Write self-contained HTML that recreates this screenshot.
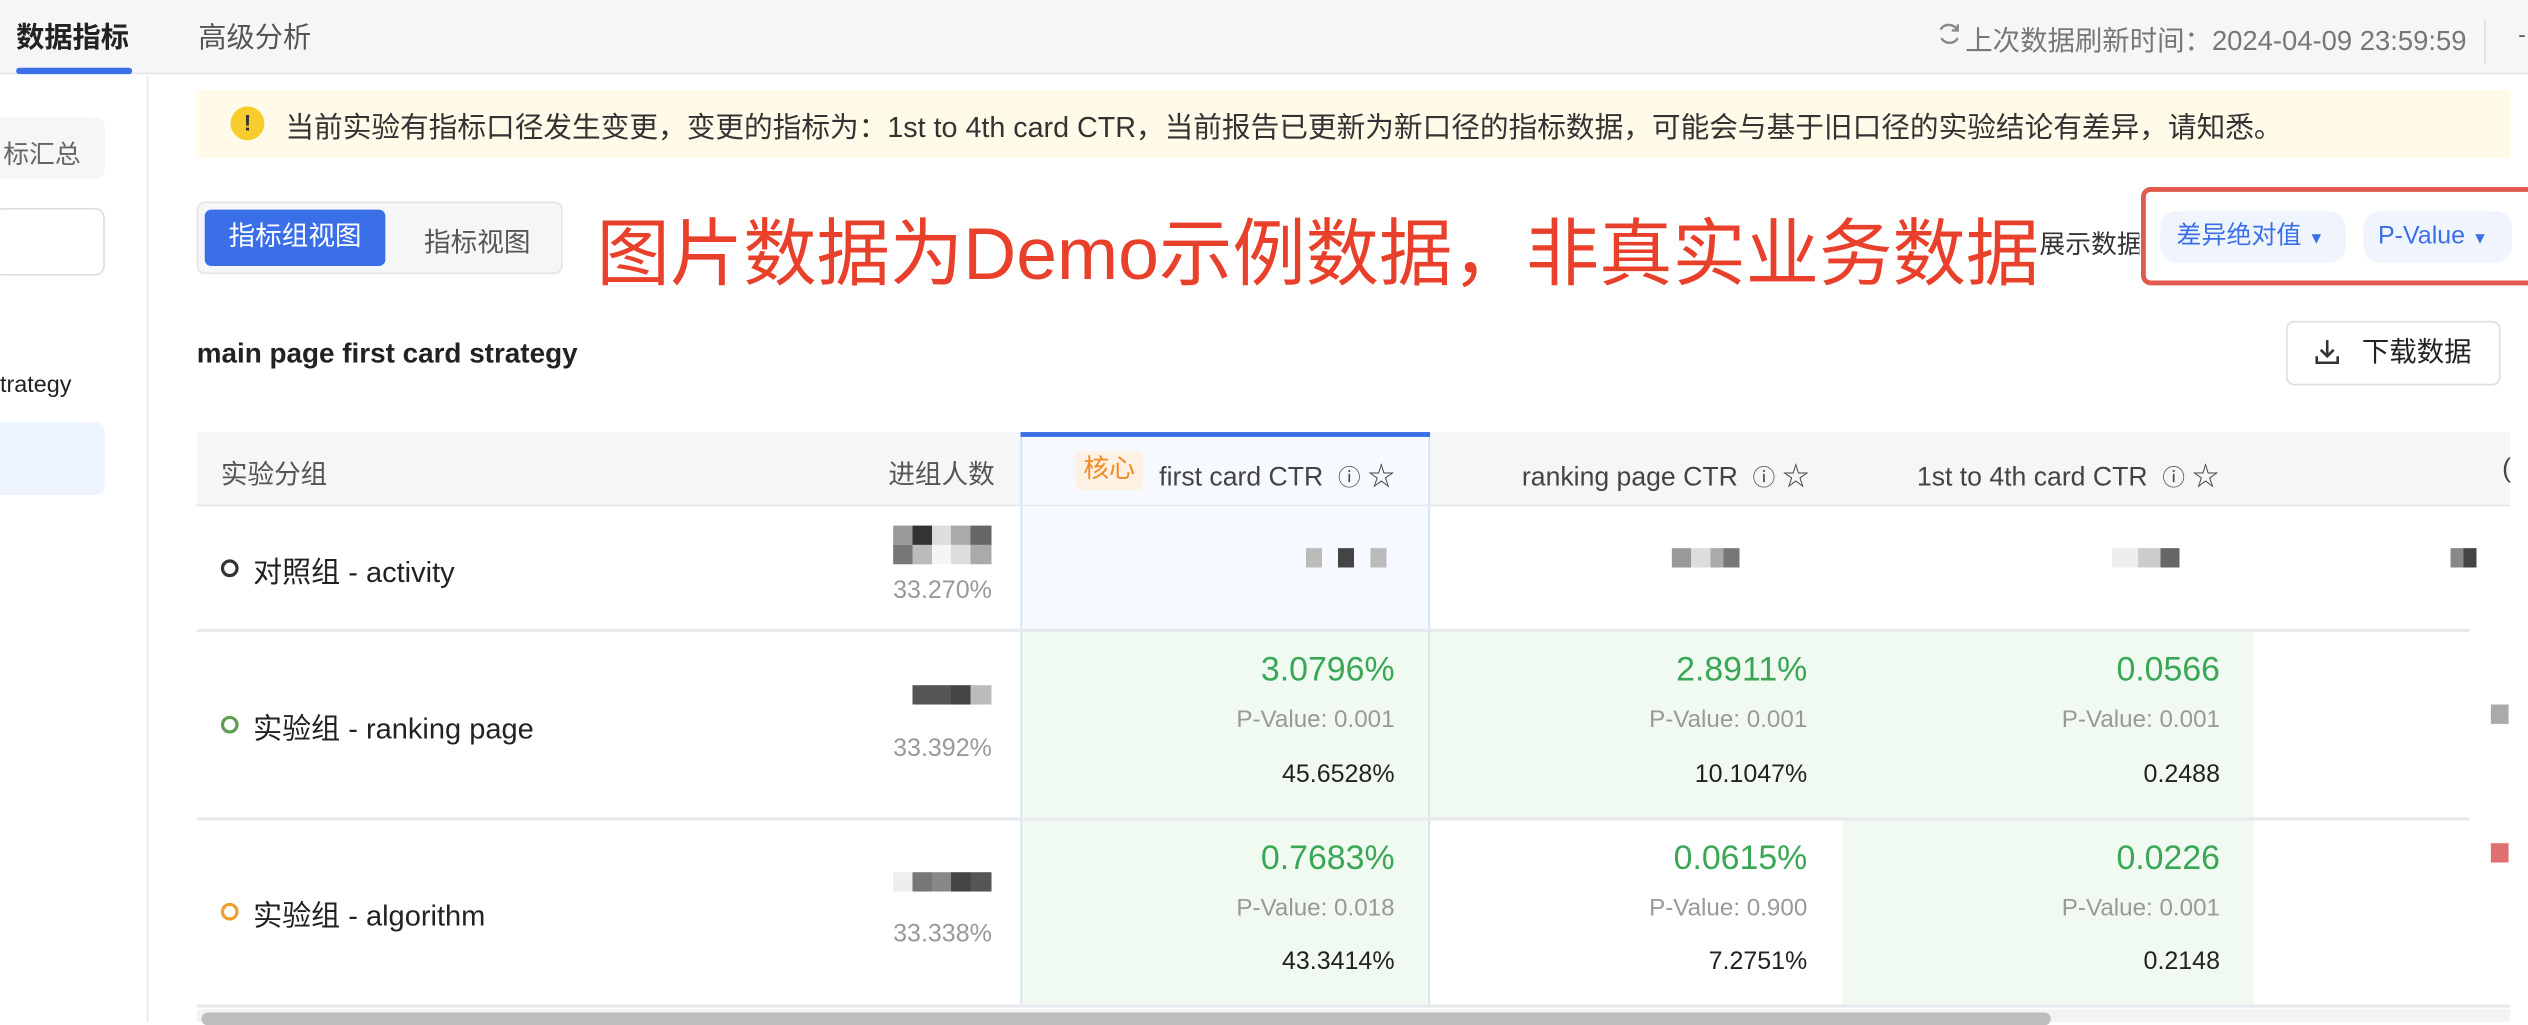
<!DOCTYPE html>
<html><head><meta charset="utf-8"><style>
*{box-sizing:border-box;margin:0;padding:0}
html,body{width:2528px;height:1022px;overflow:hidden;background:#fff}
#w{position:absolute;left:0;top:0;width:1568px;height:634px;transform:scale(1.6122);transform-origin:0 0;font-family:"Liberation Sans","Noto Sans CJK SC",sans-serif;color:#333;font-size:14px}
.a{position:absolute;white-space:nowrap}
.px{position:absolute}
</style></head><body><div id="w">
<!-- top bar -->
<div class="a" style="left:0;top:0;width:1568px;height:46px;background:#f5f6f8;border-bottom:1px solid #e6e7ea"></div>
<div class="a" style="left:10px;top:10px;font-size:17.5px;font-weight:bold;color:#222">数据指标</div>
<div class="a" style="left:10px;top:42px;width:72px;height:4px;background:#3a6fe8;border-radius:2px"></div>
<div class="a" style="left:123px;top:10px;font-size:17.5px;color:#555">高级分析</div>
<svg class="a" style="left:1201px;top:13px" width="16" height="16" viewBox="0 0 15 15"><path d="M12 5A5.5 5.5 0 0 0 2.5 5M3 10a5.5 5.5 0 0 0 9.5 0" fill="none" stroke="#888" stroke-width="1.4"/><path d="M12.5 2v3.5H9" fill="none" stroke="#888" stroke-width="1.4"/></svg>
<div class="a" style="left:1219px;top:11px;font-size:17px;color:#777">上次数据刷新时间：2024-04-09 23:59:59</div>
<div class="a" style="left:1541px;top:12px;width:1px;height:28px;background:#ddd"></div>
<div class="a" style="left:1562px;top:13px;color:#555">-</div>
<!-- sidebar -->
<div class="a" style="left:91px;top:47px;width:1px;height:587px;background:#e6e7ea"></div>
<div class="a" style="left:0;top:73px;width:65px;height:38px;background:#f5f6f8;border-radius:0 6px 6px 0"></div>
<div class="a" style="left:2px;top:82px;font-size:16px;color:#666">标汇总</div>
<div class="a" style="left:-4px;top:129px;width:69px;height:42px;border:1px solid #dcdde0;border-radius:6px"></div>
<div class="a" style="left:0;top:231px;font-size:14.5px;color:#222">trategy</div>
<div class="a" style="left:0;top:262px;width:65px;height:45px;background:#eef4ff;border-radius:0 6px 6px 0"></div>
<!-- alert -->
<div class="a" style="left:122px;top:56px;width:1435px;height:42px;background:#fffbe8"></div>
<div class="a" style="left:143px;top:66px;width:21px;height:21px;border-radius:50%;background:#f7cd2e;color:#333;font-weight:bold;font-size:14px;text-align:center;line-height:21px">!</div>
<div class="a" style="left:177px;top:65px;font-size:17.8px;color:#333">当前实验有指标口径发生变更，变更的指标为：1st to 4th card CTR，当前报告已更新为新口径的指标数据，可能会与基于旧口径的实验结论有差异，请知悉。</div>
<!-- segmented -->
<div class="a" style="left:122px;top:125px;width:227px;height:45px;background:#f5f6f8;border:1px solid #e2e3e6;border-radius:5px"></div>
<div class="a" style="left:127px;top:130px;width:112px;height:35px;background:#3a6fe8;border-radius:4px;color:#fff;font-size:16.5px;text-align:center;line-height:35px">指标组视图</div>
<div class="a" style="left:263px;top:137px;font-size:16.5px;color:#555">指标视图</div>
<div class="a" style="left:370px;top:121px;font-size:45.5px;color:#e8402a">图片数据为Demo示例数据，非真实业务数据</div>
<div class="a" style="left:1265px;top:138px;font-size:16px;color:#333;width:62px;overflow:hidden">展示数据</div>
<div class="a" style="left:1328px;top:116px;width:250px;height:61px;border:3px solid #e05a4e;border-radius:6px"></div>
<div class="a" style="left:1340px;top:131px;width:115px;height:32px;background:#f0f4fd;border-radius:10px;color:#3a6fe8;font-size:15.5px;line-height:32px;padding-left:10px">差异绝对值 <span style="font-size:10px">▼</span></div>
<div class="a" style="left:1466px;top:131px;width:92px;height:32px;background:#f0f4fd;border-radius:10px;color:#3a6fe8;font-size:15.5px;line-height:32px;padding-left:9px">P-Value <span style="font-size:10px">▼</span></div>
<div class="a" style="left:122px;top:209px;font-size:17.3px;font-weight:bold;color:#222">main page first card strategy</div>
<div class="a" style="left:1418px;top:199px;width:133px;height:40px;border:1px solid #dcdde0;border-radius:5px;font-size:17px;color:#222;line-height:38px;padding-left:46px">下载数据</div>
<svg class="a" style="left:1435px;top:209px" width="17" height="18" viewBox="0 0 17 18"><path d="M8.5 2v10M4.5 8l4 4 4-4M2 12v4h13v-4" fill="none" stroke="#333" stroke-width="1.6"/></svg>
<!-- table -->
<div class="a" style="left:122px;top:268px;width:1435px;height:45px;background:#f5f6f8"></div>
<div class="a" style="left:137px;top:281px;color:#555;font-size:16.5px">实验分组</div>
<div class="a" style="left:551px;top:281px;color:#555;font-size:16.5px">进组人数</div>
<!-- col backgrounds -->
<div class="a" style="left:633px;top:268px;width:254px;height:123px;background:#f6f9ff;border-left:1px solid #cfe0fb;border-right:1px solid #cfe0fb"></div>
<div class="a" style="left:633px;top:268px;width:254px;height:3px;background:#3a6fe8"></div>
<div class="a" style="left:633px;top:391px;width:254px;height:233px;background:#f1faf0;border-left:1px solid #cfe0fb;border-right:1px solid #cfe0fb"></div>
<div class="a" style="left:887px;top:391px;width:256px;height:117px;background:#f1faf0"></div>
<div class="a" style="left:1143px;top:391px;width:255px;height:233px;background:#f1faf0"></div>
<div class="a" style="left:667px;top:280px;width:42px;height:24px;background:#fdf1e3;border-radius:3px;color:#f08a24;font-size:16px;text-align:center;line-height:24px">核心</div>
<div class="a" style="left:719px;top:282px;color:#444;font-size:16.5px">first card CTR &nbsp;<span style="font-size:14px">ⓘ</span> ☆</div>
<div class="a" style="left:944px;top:282px;color:#444;font-size:16.5px">ranking page CTR &nbsp;<span style="font-size:14px">ⓘ</span> ☆</div>
<div class="a" style="left:1189px;top:282px;color:#444;font-size:16.5px">1st to 4th card CTR &nbsp;<span style="font-size:14px">ⓘ</span> ☆</div>
<div class="a" style="left:1552px;top:282px;color:#444;font-size:16.5px">(</div>
<!-- row lines -->
<div class="a" style="left:122px;top:313px;width:1435px;height:1px;background:#e6e7ea"></div>
<div class="a" style="left:122px;top:390px;width:1410px;height:2px;background:#e8e9ec"></div>
<div class="a" style="left:122px;top:507px;width:1410px;height:2px;background:#e8e9ec"></div>
<div class="a" style="left:122px;top:623px;width:1435px;height:2px;background:#e8e9ec"></div>
<!-- group names -->
<div class="a" style="left:137px;top:347px;width:11px;height:11px;border:2px solid #333;border-radius:50%"></div>
<div class="a" style="left:157px;top:341px;font-size:18px;color:#222">对照组 - activity</div>
<div class="a" style="left:137px;top:444px;width:11px;height:11px;border:2px solid #5a9e4e;border-radius:50%"></div>
<div class="a" style="left:157px;top:438px;font-size:18px;color:#222">实验组 - ranking page</div>
<div class="a" style="left:137px;top:560px;width:11px;height:11px;border:2px solid #f0a030;border-radius:50%"></div>
<div class="a" style="left:157px;top:554px;font-size:18px;color:#222">实验组 - algorithm</div>
<!-- pixelated counts -->
<div class="px" style="left:554px;top:326px;width:61px;height:12px;background:linear-gradient(90deg,#999 0 12px,#333 12px 24px,#ddd 24px 36px,#aaa 36px 48px,#666 48px)"></div>
<div class="px" style="left:554px;top:338px;width:61px;height:12px;background:linear-gradient(90deg,#777 0 12px,#bbb 12px 24px,#f5f5f5 24px 36px,#ddd 36px 48px,#aaa 48px)"></div>
<div class="a" style="left:554px;top:358px;color:#999;font-size:15.5px">33.270%</div>
<div class="px" style="left:566px;top:425px;width:49px;height:12px;background:linear-gradient(90deg,#555 0 24px,#444 24px 36px,#bbb 36px)"></div>
<div class="a" style="left:554px;top:456px;color:#999;font-size:15.5px">33.392%</div>
<div class="px" style="left:554px;top:541px;width:61px;height:12px;background:linear-gradient(90deg,#eee 0 12px,#777 12px 24px,#888 24px 36px,#444 36px 48px,#555 48px)"></div>
<div class="a" style="left:554px;top:571px;color:#999;font-size:15.5px">33.338%</div>
<!-- row1 blur -->
<div class="px" style="left:800px;top:340px;width:65px;height:12px;background:linear-gradient(90deg,#f6f9ff 0 10px,#bbb 10px 20px,#f6f9ff 20px 30px,#444 30px 40px,#f6f9ff 40px 50px,#bbb 50px 60px,#f6f9ff 60px)"></div>
<div class="px" style="left:1037px;top:340px;width:60px;height:12px;background:linear-gradient(90deg,#999 0 12px,#ddd 12px 24px,#aaa 24px 32px,#777 32px 42px,#fff 42px)"></div>
<div class="px" style="left:1310px;top:340px;width:52px;height:12px;background:linear-gradient(90deg,#eee 0 16px,#ccc 16px 30px,#666 30px 42px,#fff 42px)"></div>
<div class="px" style="left:1520px;top:340px;width:26px;height:12px;background:linear-gradient(90deg,#888 0 8px,#444 8px 16px,#fff 16px)"></div>
<div class="px" style="left:1545px;top:437px;width:11px;height:12px;background:#aaa"></div>
<div class="px" style="left:1545px;top:523px;width:11px;height:12px;background:#e07070"></div>
<!-- values -->
<div class="a" style="right:703px;top:404px;font-size:21px;color:#3aa757">3.0796%</div>
<div class="a" style="right:703px;top:438px;font-size:15px;color:#999">P-Value: 0.001</div>
<div class="a" style="right:703px;top:472px;font-size:15.5px;color:#222">45.6528%</div>
<div class="a" style="right:447px;top:404px;font-size:21px;color:#3aa757">2.8911%</div>
<div class="a" style="right:447px;top:438px;font-size:15px;color:#999">P-Value: 0.001</div>
<div class="a" style="right:447px;top:472px;font-size:15.5px;color:#222">10.1047%</div>
<div class="a" style="right:191px;top:404px;font-size:21px;color:#3aa757">0.0566</div>
<div class="a" style="right:191px;top:438px;font-size:15px;color:#999">P-Value: 0.001</div>
<div class="a" style="right:191px;top:472px;font-size:15.5px;color:#222">0.2488</div>
<div class="a" style="right:703px;top:521px;font-size:21px;color:#3aa757">0.7683%</div>
<div class="a" style="right:703px;top:555px;font-size:15px;color:#999">P-Value: 0.018</div>
<div class="a" style="right:703px;top:588px;font-size:15.5px;color:#222">43.3414%</div>
<div class="a" style="right:447px;top:521px;font-size:21px;color:#3aa757">0.0615%</div>
<div class="a" style="right:447px;top:555px;font-size:15px;color:#999">P-Value: 0.900</div>
<div class="a" style="right:447px;top:588px;font-size:15.5px;color:#222">7.2751%</div>
<div class="a" style="right:191px;top:521px;font-size:21px;color:#3aa757">0.0226</div>
<div class="a" style="right:191px;top:555px;font-size:15px;color:#999">P-Value: 0.001</div>
<div class="a" style="right:191px;top:588px;font-size:15.5px;color:#222">0.2148</div>
<!-- scrollbar -->
<div class="a" style="left:122px;top:626px;width:1435px;height:8px;background:#f3f3f3"></div>
<div class="a" style="left:125px;top:628px;width:1147px;height:8px;background:#bdbdbd;border-radius:4px"></div>
</div></body></html>
